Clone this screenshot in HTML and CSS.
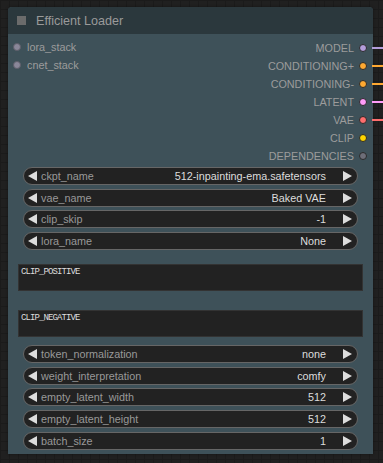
FILE: index.html
```html
<!DOCTYPE html>
<html>
<head>
<meta charset="utf-8">
<link rel="stylesheet" href="styles.css">
</head>
<body>
<div class="canvas">
  <div class="node">
    <div class="title">
      <span class="box"></span>
      <span class="title-text">Efficient Loader</span>
    </div>
    <div class="body">
      <div class="io">
        <div class="inputs">
          <div class="in"><span class="dot in-dot"></span><span>lora_stack</span></div>
          <div class="in"><span class="dot in-dot"></span><span>cnet_stack</span></div>
        </div>
        <div class="outputs">
          <div class="out"><span>MODEL</span><span class="dot c-model link l-model"></span></div>
          <div class="out"><span>CONDITIONING+</span><span class="dot c-cond link l-cond"></span></div>
          <div class="out"><span>CONDITIONING-</span><span class="dot c-cond link l-cond"></span></div>
          <div class="out"><span>LATENT</span><span class="dot c-latent link l-latent"></span></div>
          <div class="out"><span>VAE</span><span class="dot c-vae link l-vae"></span></div>
          <div class="out"><span>CLIP</span><span class="dot c-clip"></span></div>
          <div class="out"><span>DEPENDENCIES</span><span class="dot c-dep"></span></div>
        </div>
      </div>
      <div class="widgets first">
        <div class="widget"><svg class="arr" viewBox="0 0 9 10"><polygon points="9,0 9,10 0,5"/></svg><span class="label">ckpt_name</span><span class="value">512-inpainting-ema.safetensors</span><svg class="arr" viewBox="0 0 9 10"><polygon points="0,0 0,10 9,5"/></svg></div>
        <div class="widget"><svg class="arr" viewBox="0 0 9 10"><polygon points="9,0 9,10 0,5"/></svg><span class="label">vae_name</span><span class="value">Baked VAE</span><svg class="arr" viewBox="0 0 9 10"><polygon points="0,0 0,10 9,5"/></svg></div>
        <div class="widget"><svg class="arr" viewBox="0 0 9 10"><polygon points="9,0 9,10 0,5"/></svg><span class="label">clip_skip</span><span class="value">-1</span><svg class="arr" viewBox="0 0 9 10"><polygon points="0,0 0,10 9,5"/></svg></div>
        <div class="widget"><svg class="arr" viewBox="0 0 9 10"><polygon points="9,0 9,10 0,5"/></svg><span class="label">lora_name</span><span class="value">None</span><svg class="arr" viewBox="0 0 9 10"><polygon points="0,0 0,10 9,5"/></svg></div>
      </div>
      <div class="text-area pos">CLIP_POSITIVE</div>
      <div class="text-area neg">CLIP_NEGATIVE</div>
      <div class="widgets last">
        <div class="widget"><svg class="arr" viewBox="0 0 9 10"><polygon points="9,0 9,10 0,5"/></svg><span class="label">token_normalization</span><span class="value">none</span><svg class="arr" viewBox="0 0 9 10"><polygon points="0,0 0,10 9,5"/></svg></div>
        <div class="widget"><svg class="arr" viewBox="0 0 9 10"><polygon points="9,0 9,10 0,5"/></svg><span class="label">weight_interpretation</span><span class="value">comfy</span><svg class="arr" viewBox="0 0 9 10"><polygon points="0,0 0,10 9,5"/></svg></div>
        <div class="widget"><svg class="arr" viewBox="0 0 9 10"><polygon points="9,0 9,10 0,5"/></svg><span class="label">empty_latent_width</span><span class="value">512</span><svg class="arr" viewBox="0 0 9 10"><polygon points="0,0 0,10 9,5"/></svg></div>
        <div class="widget"><svg class="arr" viewBox="0 0 9 10"><polygon points="9,0 9,10 0,5"/></svg><span class="label">empty_latent_height</span><span class="value">512</span><svg class="arr" viewBox="0 0 9 10"><polygon points="0,0 0,10 9,5"/></svg></div>
        <div class="widget"><svg class="arr" viewBox="0 0 9 10"><polygon points="9,0 9,10 0,5"/></svg><span class="label">batch_size</span><span class="value">1</span><svg class="arr" viewBox="0 0 9 10"><polygon points="0,0 0,10 9,5"/></svg></div>
      </div>
    </div>
  </div>
</div>
</body>
</html>
```

FILE: styles.css
```css
html, body {
  margin: 0;
  padding: 0;
  width: 383px;
  height: 463px;
  overflow: hidden;
}
body {
  background-color: #202020;
  background-image:
    linear-gradient(to right, #1b1b1b 1px, transparent 1px),
    linear-gradient(to bottom, #1b1b1b 1px, transparent 1px);
  background-size: 9px 9px;
  font-family: "Liberation Sans", Arial, sans-serif;
}
.canvas {
  padding: 7px 0 0 8px;
}
.node {
  width: 365px;
  height: 447px;
  background: #3e5159;
  border-radius: 4px 4px 0 0;
  box-shadow: 0 0 3px rgba(0,0,0,0.4);
  position: relative;
}
.title {
  height: 27px;
  background: #2b383d;
  border-radius: 4px 4px 0 0;
  display: flex;
  align-items: center;
  padding-left: 9px;
  gap: 10px;
}
.box {
  width: 9px;
  height: 9px;
  background: #6b6b6b;
}
.title-text {
  color: #9a9a9a;
  font-size: 12.6px;
}
.body {
  padding: 4px 0 0 0;
}
.io {
  display: flex;
  justify-content: space-between;
  height: 127px;
}
.inputs, .outputs {
  display: flex;
  flex-direction: column;
}
.outputs { padding-top: 1px; }
.in, .out {
  height: 18px;
  display: flex;
  align-items: center;
  font-size: 10.8px;
  color: #9c9c9c;
}
.in {
  padding-left: 5px;
  gap: 6px;
}
.out {
  justify-content: flex-end;
  padding-right: 6px;
  gap: 5px;
}
.dot {
  width: 8px;
  height: 8px;
  border-radius: 50%;
  box-sizing: border-box;
  border: 1px solid #2a2a2a;
  position: relative;
}
.in-dot { background: #8a8799; border-color: #5e5e6a; }
.c-model { background: #b39ddb; }
.c-cond { background: #ffa931; }
.c-latent { background: #ff9cf9; }
.c-vae { background: #ff6e6e; }
.c-clip { background: #ffd500; }
.c-dep { background: #6d6e78; }
.link::after {
  content: "";
  position: absolute;
  left: 12px;
  top: 2px;
  width: 14px;
  height: 2px;
}
.l-model::after { background: #b39ddb; }
.l-cond::after { background: #ffa931; }
.l-latent::after { background: #ff9cf9; }
.l-vae::after { background: #ff6e6e; }
.widgets {
  display: flex;
  flex-direction: column;
  gap: 3.7px;
  padding: 0 15px 0 15px;
}
.widgets.first { margin-top: 2px; }
.widgets.last { margin-top: 8px; }
.widget {
  height: 18px;
  box-sizing: border-box;
  background: #222222;
  border: 1px solid #666666;
  border-radius: 9px;
  display: flex;
  align-items: center;
  padding: 0 5px 0 4px;
  font-size: 10.8px;
}
.arr {
  width: 9px;
  height: 10px;
  fill: #dddddd;
  flex: none;
}
.label {
  color: #999999;
  margin-left: 4px;
  flex: 1;
}
.value {
  color: #dddddd;
  margin-right: 17px;
}
.text-area {
  margin: 0 10px 0 10px;
  height: 27px;
  background: #222222;
  box-sizing: border-box;
  border: 1px solid #333;
  font-family: "Liberation Mono", monospace;
  font-size: 9px;
  letter-spacing: -0.9px;
  line-height: 10px;
  color: #dddddd;
  padding: 2px 2px;
}
.text-area.pos { margin-top: 14px; }
.text-area.neg { margin-top: 19px; }
```
